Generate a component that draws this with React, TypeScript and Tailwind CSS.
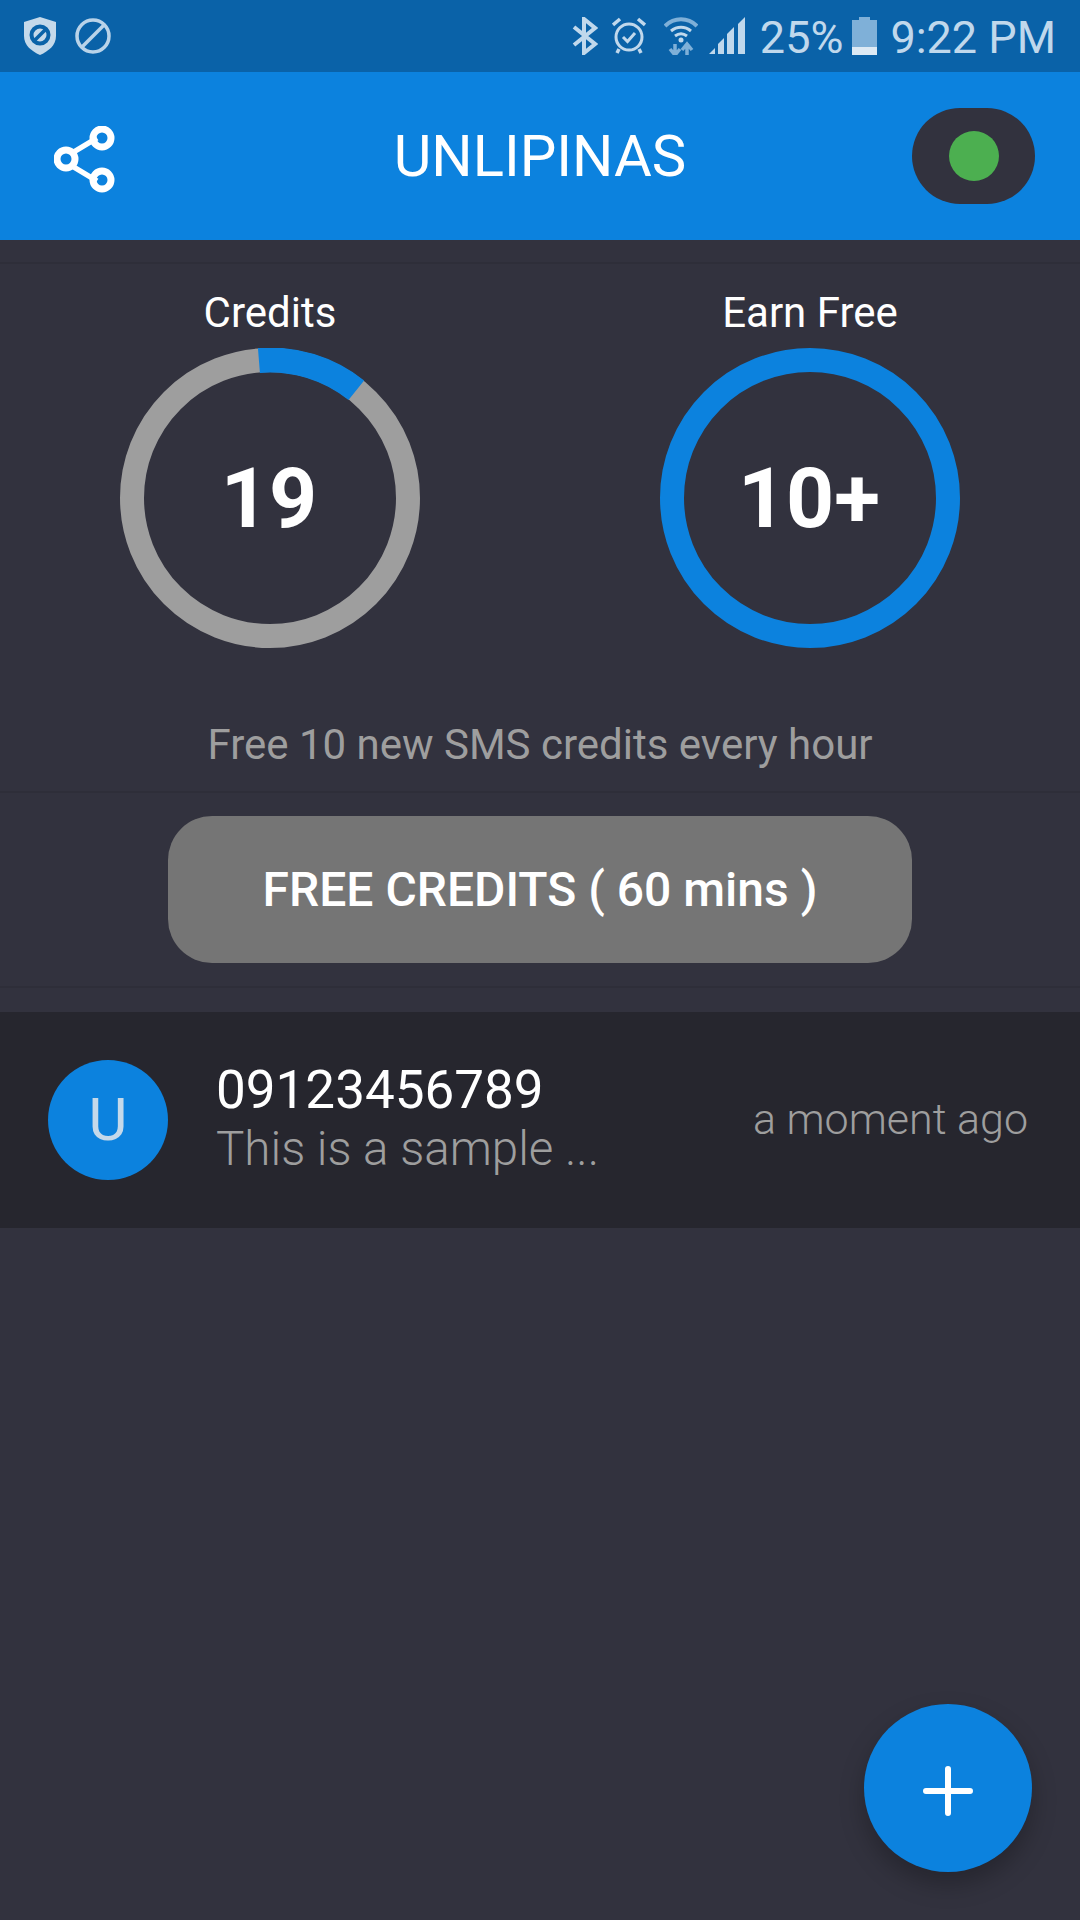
const font = "font-['Roboto',sans-serif]";

function ShieldIcon() {
  return (
    <svg width="34" height="40" viewBox="0 0 34 40">
      <path d="M17 1 L33 6 V20 C33 29 26 35 17 39 C8 35 1 29 1 20 V6 Z" fill="#c5d9ea" />
      <circle cx="17" cy="19" r="8.5" fill="none" stroke="#0a62a8" strokeWidth="4" />
      <path d="M11 25 L23 13" stroke="#0a62a8" strokeWidth="3.5" />
    </svg>
  );
}

function BlockIcon() {
  return (
    <svg width="36" height="36" viewBox="0 0 36 36" fill="none" stroke="#b9d3e9" strokeWidth="3.5">
      <circle cx="18" cy="18" r="16" />
      <path d="M7 29 L29 7" />
    </svg>
  );
}

function BluetoothIcon() {
  return (
    <svg width="26" height="38" viewBox="0 0 26 38" fill="none" stroke="#c0d8ec" strokeWidth="4">
      <path d="M2 10 L23 27 L12 36 V2 L23 11 L2 28" />
    </svg>
  );
}

function AlarmIcon() {
  return (
    <svg width="34" height="38" viewBox="0 0 34 38" fill="none" stroke="#c0d8ec" strokeWidth="3">
      <circle cx="17" cy="20" r="13" />
      <path d="M11 20 L15.5 24.5 L23 16" strokeWidth="3" />
      <path d="M1 8 L8 2 M33 8 L26 2 M7 32 L5 36 M27 32 L29 36" strokeWidth="3.5" />
    </svg>
  );
}

function WifiIcon() {
  return (
    <svg width="34" height="38" viewBox="0 0 34 38" fill="none" stroke="#7fb0d8">
      <path d="M1 9 C10 0 24 0 33 9" strokeWidth="4" />
      <path d="M7 14 C13 9 21 9 27 14" strokeWidth="3" stroke="#c0d8ec" />
      <path d="M11 19 C15 16 19 16 23 19" strokeWidth="3" stroke="#c0d8ec" />
      <circle cx="17" cy="23" r="2.5" fill="#c0d8ec" stroke="none" />
      <path d="M11 27 V37 M6 32 L11 38 L16 32 M23 38 V28 M18 33 L23 27 L28 33" strokeWidth="3.5" />
    </svg>
  );
}

function SignalIcon() {
  return (
    <svg width="37" height="38" viewBox="0 0 37 38" fill="#c0d8ec">
      <path d="M0 37 L6 31 V37 Z" />
      <path d="M9 37 V27 L15 21 V37 Z" />
      <path d="M18 37 V17 L25 10 V37 Z" />
      <path d="M29 37 V7 L36 0 V37 Z" />
    </svg>
  );
}

function BatteryIcon() {
  return (
    <svg width="25" height="38" viewBox="0 0 25 38">
      <path d="M7 0 H18 V3 H25 V38 H0 V3 H7 Z" fill="#7fb0d8" />
      <rect x="0" y="30" width="25" height="8" fill="#dce9f4" />
    </svg>
  );
}

function ShareIcon() {
  return (
    <svg width="62" height="68" viewBox="0 0 62 68" fill="none" stroke="#ffffff" strokeWidth="7">
      <path d="M18 27 L43 12 M18 40 L43 55" strokeWidth="5.5" />
      <circle cx="12" cy="33" r="9" />
      <circle cx="48" cy="12" r="9" />
      <circle cx="48" cy="54" r="9" />
    </svg>
  );
}

function Ring({ label, value, part }: { label: string; value: string; part?: boolean }) {
  return (
    <div className="flex flex-col items-center w-[300px]">
      <div className="text-[42px] leading-[46px] text-white">{label}</div>
      <div className="relative w-[300px] h-[300px] mt-[12px]">
        <svg width="300" height="300" viewBox="0 0 300 300" fill="none">
          <circle cx="150" cy="150" r="138" strokeWidth="24" stroke={part ? "#9e9e9e" : "#0c82de"} />
          {part && (
            <circle
              cx="150"
              cy="150"
              r="138"
              strokeWidth="25"
              stroke="#0c82de"
              strokeDasharray="104.3 763"
              transform="rotate(-94.6 150 150)"
            />
          )}
        </svg>
        <div className="absolute inset-0 flex items-center justify-center pt-[2px] pr-[2px] text-[84px] font-bold text-white">
          {value}
        </div>
      </div>
    </div>
  );
}

export default function App() {
  return (
    <div className={`${font} relative w-[1080px] h-[1920px] overflow-hidden bg-[#32323e]`}>
      {/* status bar */}
      <div className="h-[72px] bg-[#0a62a8] flex items-center justify-between pl-[23px] pr-[24px]">
        <div className="flex items-center gap-[18px]">
          <ShieldIcon />
          <BlockIcon />
        </div>
        <div className="flex items-center text-[45px] text-[#c0d8ec]">
          <div className="flex items-center gap-[14px]">
            <BluetoothIcon />
            <AlarmIcon />
          </div>
          <div className="ml-[18px]">
            <WifiIcon />
          </div>
          <div className="ml-[11px]">
            <SignalIcon />
          </div>
          <span className="ml-[14px] mt-[4px]">25%</span>
          <div className="ml-[9px]">
            <BatteryIcon />
          </div>
          <span className="ml-[13px] mt-[4px]">9:22 PM</span>
        </div>
      </div>

      {/* header */}
      <div className="h-[168px] bg-[#0c82de] flex items-center px-[45px]">
        <div className="w-[123px] pl-[9px] pt-[8px]">
          <ShareIcon />
        </div>
        <div className="flex-1 text-center text-[58px] text-white">UNLIPINAS</div>
        <div className="w-[123px] h-[96px] rounded-[48px] bg-[#32323e] flex items-center justify-center">
          <div className="w-[50px] h-[50px] rounded-full bg-[#4caf50]" />
        </div>
      </div>

      <div className="mt-[22px] border-t-2 border-[#2e2e39] flex justify-center gap-[240px] pt-[26px]">
        <Ring label="Credits" value="19" part />
        <Ring label="Earn Free" value="10+" />
      </div>

      <div className="mt-[72px] text-center text-[42px] leading-[50px] text-[#9e9e9e]">
        Free 10 new SMS credits every hour
      </div>

      <div className="mt-[21px] border-y-2 border-[#2e2e39] py-[23px] flex justify-center">
        <button className="w-[744px] h-[147px] rounded-[44px] bg-[#757575] text-[48px] font-medium text-white">
          FREE CREDITS ( 60 mins )
        </button>
      </div>

      {/* message row */}
      <div className="mt-[24px] h-[216px] bg-[#26262e] flex items-center pl-[48px] pr-[52px]">
        <div className="w-[120px] h-[120px] rounded-full bg-[#0c82de] flex items-center justify-center text-[60px] text-[#c5d9ea]">
          U
        </div>
        <div className="ml-[48px] flex-1">
          <div className="text-[53px] leading-[58px] text-white">09123456789</div>
          <div className="text-[47.5px] leading-[60px] font-light text-[#9e9e9e]">This is a sample ...</div>
        </div>
        <div className="mb-[2px] text-[43px] font-light text-[#9e9e9e]">a moment ago</div>
      </div>

      {/* add button */}
      <div className="absolute left-[864px] top-[1704px] w-[168px] h-[168px] rounded-full bg-[#0c82de] shadow-[0_12px_24px_rgba(0,0,0,0.25)] flex items-center justify-center">
        <svg className="mt-[5px]" width="50" height="50" viewBox="0 0 50 50" stroke="#ffffff" strokeWidth="6" strokeLinecap="round">
          <path d="M25 3 V47 M3 25 H47" />
        </svg>
      </div>
    </div>
  );
}
